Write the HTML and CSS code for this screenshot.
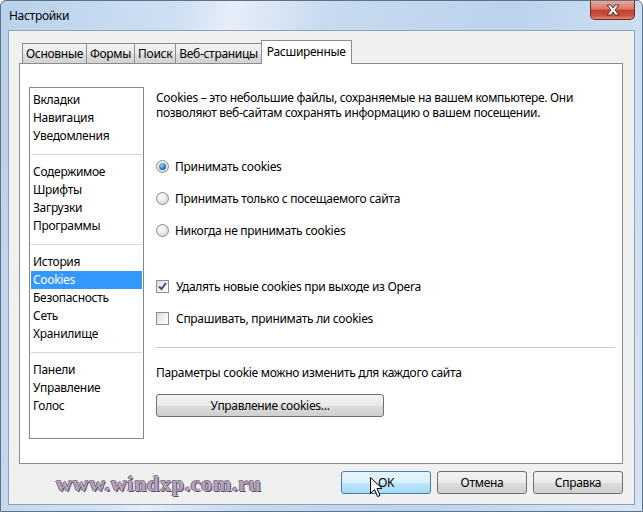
FILE: index.html
```html
<!DOCTYPE html>
<html lang="ru">
<head>
    <meta charset="UTF-8">
    <title>Настройки</title>
    <link rel="stylesheet" href="styles.css">
</head>
<body>
    <div class="window">
        <div class="titlebar">
            <span class="title">Настройки</span>
            <div class="close">
                <svg width="16" height="12" viewBox="0 0 16 12">
                    <path d="M2 1 L6 1 L8 4 L10 1 L14 1 L10 6 L14 11 L10 11 L8 8 L6 11 L2 11 L6 6 Z" fill="#fff" stroke="#5a2a24" stroke-width="1"/>
                </svg>
            </div>
        </div>
        <div class="client">
            <div class="tabs">
                <div class="tab">Основные</div>
                <div class="tab">Формы</div>
                <div class="tab">Поиск</div>
                <div class="tab">Веб-страницы</div>
                <div class="tab active">Расширенные</div>
            </div>
            <div class="panel">
                <ul class="nav">
                    <li>Вкладки</li>
                    <li>Навигация</li>
                    <li>Уведомления</li>
                    <li class="sep"></li>
                    <li>Содержимое</li>
                    <li>Шрифты</li>
                    <li>Загрузки</li>
                    <li>Программы</li>
                    <li class="sep"></li>
                    <li>История</li>
                    <li class="selected">Cookies</li>
                    <li>Безопасность</li>
                    <li>Сеть</li>
                    <li>Хранилище</li>
                    <li class="sep"></li>
                    <li>Панели</li>
                    <li>Управление</li>
                    <li>Голос</li>
                </ul>
                <div class="content">
                    <p class="desc">Cookies – это небольшие файлы, сохраняемые на вашем компьютере. Они позволяют веб-сайтам сохранять информацию о вашем посещении.</p>
                    <div class="options radios">
                        <div class="option"><span class="radio checked"></span>Принимать cookies</div>
                        <div class="option"><span class="radio"></span>Принимать только с посещаемого сайта</div>
                        <div class="option"><span class="radio"></span>Никогда не принимать cookies</div>
                    </div>
                    <div class="options checks">
                        <div class="option"><span class="check checked">
                            <svg width="9" height="9" viewBox="0 0 9 9"><path d="M1 4.5 L3.5 7 L8 1" fill="none" stroke="#3b4f8c" stroke-width="2"/></svg>
                        </span>Удалять новые cookies при выходе из Opera</div>
                        <div class="option"><span class="check"></span>Спрашивать, принимать ли cookies</div>
                    </div>
                    <div class="divider"></div>
                    <p class="note">Параметры cookie можно изменить для каждого сайта</p>
                    <button class="btn wide">Управление cookies...</button>
                </div>
            </div>
            <div class="footer">
                <span class="watermark">www.windxp.com.ru</span>
                <div class="buttons">
                    <button class="btn hover">OK</button>
                    <button class="btn">Отмена</button>
                    <button class="btn">Справка</button>
                </div>
            </div>
        </div>
        <svg class="cursor" width="13" height="21" viewBox="0 0 13 21">
            <path d="M0.5 0.5 L0.5 16.5 L4.5 12.5 L7.5 19.5 L10 18.5 L7 11.5 L12 11.5 Z" fill="#fff" stroke="#000" stroke-width="1"/>
        </svg>
    </div>
</body>
</html>
```

FILE: styles.css
```css
body {
    margin: 0;
    font-family: "Noto Sans", "Open Sans", sans-serif;
    font-size: 12px;
    letter-spacing: -0.3px;
    color: #000;
    background: #fff;
}
.window {
    position: relative;
    width: 643px;
    height: 512px;
    box-sizing: border-box;
    padding: 0 7px 7px 7px;
    border: 1px solid #5d7187;
    border-radius: 6px 6px 0 0;
    background: linear-gradient(100deg, #b9d1ea 0%, #cfe0f3 25%, #e6eef8 32%, #c7daef 45%, #bcd3ec 70%, #d7e5f4 100%);
    overflow: hidden;
}
.titlebar {
    height: 29px;
    display: flex;
    align-items: center;
}
.title {
    padding-left: 1px;
}
.close {
    margin-left: auto;
    align-self: flex-start;
    width: 45px;
    height: 19px;
    box-sizing: border-box;
    border: 1px solid #6d2a22;
    border-top: none;
    border-radius: 0 0 5px 5px;
    background: linear-gradient(#e8a89d 0%, #d87767 45%, #c2402c 52%, #c9543f 80%, #dc8a6f 100%);
    display: flex;
    align-items: center;
    justify-content: center;
}
.client {
    height: 475px;
    box-sizing: border-box;
    border: 1px solid #8ea3b9;
    background: #f0f0f0;
    padding: 9px 11px 0 10px;
}
.tabs {
    display: flex;
    align-items: flex-end;
    height: 23px;
    padding-left: 3px;
}
.tab {
    height: 20px;
    line-height: 19px;
    box-sizing: border-box;
    padding: 0 3px;
    border: 1px solid #898c95;
    border-bottom: none;
    margin-right: -1px;
    background: linear-gradient(#f2f2f2 0%, #ebebeb 50%, #dddddd 51%, #d2d2d2 100%);
}
.tab.active {
    height: 24px;
    line-height: 22px;
    margin-bottom: -1px;
    padding: 0 5px;
    background: #fff;
    position: relative;
    z-index: 1;
}
.panel {
    height: 401px;
    box-sizing: border-box;
    border: 1px solid #898c95;
    background: #fff;
    padding: 23px 0 0 9px;
    display: flex;
}
.nav {
    list-style: none;
    margin: 0;
    width: 115px;
    height: 352px;
    box-sizing: border-box;
    border: 1px solid #828790;
    padding: 3px 1px;
}
.nav li {
    height: 18px;
    line-height: 18px;
    padding-left: 2px;
}
.nav li.selected {
    background: #3399ff;
    color: #fff;
}
.nav li.sep {
    height: 9px;
    border-bottom: 1px solid #d6d6d6;
    margin-bottom: 8px;
}
.content {
    margin-left: 12px;
    width: 460px;
    padding-top: 3px;
}
.desc {
    margin: 0;
    line-height: 15px;
}
.options {
    display: flex;
    flex-direction: column;
}
.radios {
    margin-top: 37px;
    gap: 14px;
}
.checks {
    margin-top: 38px;
    gap: 14px;
}
.option {
    height: 18px;
    display: flex;
    align-items: center;
}
.radio {
    width: 13px;
    height: 13px;
    box-sizing: border-box;
    border-radius: 50%;
    border: 1px solid #8c8c8c;
    background: radial-gradient(circle at 40% 35%, #ffffff 0%, #e6e6e6 50%, #cfcfcf 100%);
    margin: 0 6px 0 0;
    display: flex;
    align-items: center;
    justify-content: center;
}
.radio.checked::after {
    content: "";
    width: 7px;
    height: 7px;
    border-radius: 50%;
    background: radial-gradient(circle at 40% 35%, #9fd4f7 0%, #2a77c4 55%, #1b4f8c 100%);
}
.check {
    width: 13px;
    height: 13px;
    box-sizing: border-box;
    border: 1px solid #8e8f8f;
    background: linear-gradient(135deg, #dcdcdc 0%, #f4f4f4 60%, #ffffff 100%);
    margin-right: 7px;
    display: flex;
    align-items: center;
    justify-content: center;
}
.divider {
    margin-top: 20px;
    height: 1px;
    width: 459px;
    background: #c8c8c8;
}
.note {
    margin: 16px 0 0;
    line-height: 18px;
}
.btn {
    font-family: inherit;
    font-size: 12px;
    letter-spacing: inherit;
    color: #000;
    height: 23px;
    box-sizing: border-box;
    border: 1px solid #707070;
    border-radius: 3px;
    background: linear-gradient(#f2f2f2 0%, #ebebeb 50%, #dddddd 51%, #cfcfcf 100%);
    padding: 0;
}
.btn.wide {
    margin-top: 12px;
    width: 228px;
}
.btn.hover {
    border-color: #3c7fb1;
    background: linear-gradient(#eaf6fd 0%, #d9f0fc 50%, #bee6fd 51%, #a7d9f5 100%);
}
.footer {
    margin-top: 4px;
    display: flex;
    align-items: center;
    justify-content: space-between;
}
.watermark {
    margin-left: 37px;
    margin-top: 3px;
    font-family: "Liberation Serif", serif;
    font-weight: bold;
    font-size: 22px;
    letter-spacing: 0.7px;
    color: #b3a4bb;
    text-shadow: 1px 1px 0 #5a4a62, -1px 0 0 #7a6a82, 0 -1px 0 #8a7a92;
}
.buttons {
    display: flex;
    gap: 6px;
}
.buttons .btn {
    width: 90px;
}
.cursor {
    position: absolute;
    left: 369px;
    top: 476px;
}
```
